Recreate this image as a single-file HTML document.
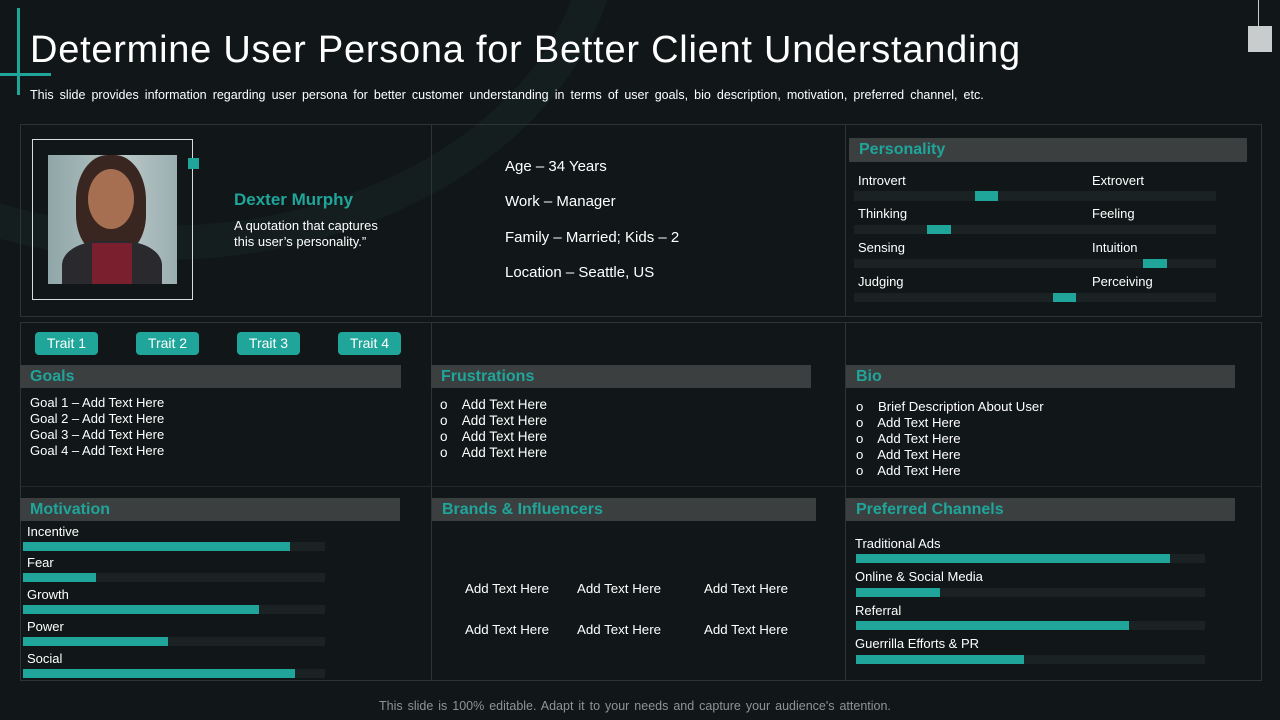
<!DOCTYPE html>
<html><head><meta charset="utf-8"><style>
*{margin:0;padding:0;box-sizing:border-box}
body{width:1280px;height:720px;background:#111718;position:relative;overflow:hidden;font-family:"Liberation Sans",sans-serif;color:#fff}
.a{position:absolute}
.t{font-size:14px;color:#fff;white-space:nowrap}
.hd{position:absolute;background:#3b3f40;color:#1fa59a;font-weight:bold;font-size:16px;padding-left:10px;line-height:23px;height:23px}
.box{position:absolute;border:1px solid #2c3536}
.trk{position:absolute;background:#1b2224;height:9px}
.fill{position:absolute;background:#1fa59a;height:9px}
.btn{position:absolute;background:#1fa59a;border-radius:4px;width:63px;height:23px;font-size:14px;text-align:center;line-height:23px}
.ln{font-size:14px;line-height:16px;white-space:nowrap}
</style></head><body>
<div class="a" style="left:-300px;top:-420px;width:920px;height:680px;border-radius:50%;border:34px solid rgba(30,60,60,0.22)"></div>
<div class="a" style="left:17px;top:8px;width:3px;height:87px;background:#1fa59a"></div>
<div class="a" style="left:0;top:73px;width:51px;height:3px;background:#1fa59a"></div>
<div class="a" style="left:1248px;top:26px;width:24px;height:26px;background:#c8cccc"></div>
<div class="a" style="left:1258px;top:0;width:1px;height:26px;background:#c8cccc"></div>
<div class="a" style="left:30px;top:29px;font-size:38px;color:#fff;letter-spacing:0.75px;white-space:nowrap">Determine User Persona for Better Client Understanding</div>
<div class="a t" style="left:30px;top:88px;font-size:12.5px;word-spacing:2.6px">This slide provides information regarding user persona for better customer understanding in terms of user goals, bio description, motivation, preferred channel, etc.</div>

<div class="box" style="left:20px;top:124px;width:1242px;height:193px"></div>
<div class="a" style="left:431px;top:125px;width:1px;height:191px;background:#2c3536"></div>
<div class="a" style="left:845px;top:125px;width:1px;height:191px;background:#2c3536"></div>
<div class="a" style="left:32px;top:139px;width:161px;height:161px;border:1px solid #d8dcdc"></div>
<div class="a" style="left:48px;top:155px;width:129px;height:129px;background:linear-gradient(90deg,#8fa6a8,#b9c6c6 60%,#9aaeb0);overflow:hidden">
 <div class="a" style="left:28px;top:0;width:70px;height:100px;border-radius:45% 45% 40% 40%;background:#3a2620"></div>
 <div class="a" style="left:40px;top:14px;width:46px;height:60px;border-radius:50%;background:#a66f52"></div>
 <div class="a" style="left:14px;top:86px;width:100px;height:60px;border-radius:40% 40% 0 0;background:#2a2a2e"></div>
 <div class="a" style="left:44px;top:88px;width:40px;height:45px;background:#7a1f2e"></div>
</div>
<div class="a" style="left:188px;top:158px;width:11px;height:11px;background:#1fa59a"></div>
<div class="a" style="left:234px;top:190px;font-size:17px;font-weight:bold;color:#1fa59a">Dexter Murphy</div>
<div class="a ln" style="left:234px;top:218px;font-size:13px">A quotation that captures<br>this user’s personality.”</div>
<div class="a t" style="left:505px;top:158px;font-size:15px">Age – 34 Years</div>
<div class="a t" style="left:505px;top:193px;font-size:15px">Work – Manager</div>
<div class="a t" style="left:505px;top:229px;font-size:15px">Family – Married; Kids – 2</div>
<div class="a t" style="left:505px;top:264px;font-size:15px">Location – Seattle, US</div>

<div class="hd" style="left:849px;top:138px;width:398px;height:24px">Personality</div>
<div class="a t" style="left:858px;top:173px;font-size:13px">Introvert</div><div class="a t" style="left:1092px;top:173px;font-size:13px">Extrovert</div>
<div class="trk" style="left:854px;top:191px;width:362px;height:10px"></div><div class="fill" style="left:975px;top:191px;width:23px;height:10px"></div>
<div class="a t" style="left:858px;top:206px;font-size:13px">Thinking</div><div class="a t" style="left:1092px;top:206px;font-size:13px">Feeling</div>
<div class="trk" style="left:854px;top:225px;width:362px"></div><div class="fill" style="left:927px;top:225px;width:24px"></div>
<div class="a t" style="left:858px;top:240px;font-size:13px">Sensing</div><div class="a t" style="left:1092px;top:240px;font-size:13px">Intuition</div>
<div class="trk" style="left:854px;top:259px;width:362px"></div><div class="fill" style="left:1143px;top:259px;width:24px"></div>
<div class="a t" style="left:858px;top:274px;font-size:13px">Judging</div><div class="a t" style="left:1092px;top:274px;font-size:13px">Perceiving</div>
<div class="trk" style="left:854px;top:293px;width:362px"></div><div class="fill" style="left:1053px;top:293px;width:23px"></div>

<div class="box" style="left:20px;top:322px;width:1242px;height:359px"></div>
<div class="a" style="left:431px;top:323px;width:1px;height:357px;background:#2c3536"></div>
<div class="a" style="left:845px;top:323px;width:1px;height:357px;background:#2c3536"></div>
<div class="a" style="left:21px;top:486px;width:1240px;height:1px;background:#222b2c"></div>
<div class="btn" style="left:35px;top:332px">Trait 1</div>
<div class="btn" style="left:136px;top:332px">Trait 2</div>
<div class="btn" style="left:237px;top:332px">Trait 3</div>
<div class="btn" style="left:338px;top:332px">Trait 4</div>

<div class="hd" style="left:20px;top:365px;width:381px">Goals</div>
<div class="hd" style="left:431px;top:365px;width:380px">Frustrations</div>
<div class="hd" style="left:846px;top:365px;width:389px">Bio</div>
<div class="a ln" style="left:30px;top:395px;font-size:13px">Goal 1 – Add Text Here<br>Goal 2 – Add Text Here<br>Goal 3 – Add Text Here<br>Goal 4 – Add Text Here</div>
<div class="a ln" style="left:440px;top:397px;font-size:13.5px">o&nbsp;&nbsp;&nbsp; Add Text Here<br>o&nbsp;&nbsp;&nbsp; Add Text Here<br>o&nbsp;&nbsp;&nbsp; Add Text Here<br>o&nbsp;&nbsp;&nbsp; Add Text Here</div>
<div class="a ln" style="left:856px;top:399px;font-size:13.2px">o&nbsp;&nbsp;&nbsp; Brief Description About User<br>o&nbsp;&nbsp;&nbsp; Add Text Here<br>o&nbsp;&nbsp;&nbsp; Add Text Here<br>o&nbsp;&nbsp;&nbsp; Add Text Here<br>o&nbsp;&nbsp;&nbsp; Add Text Here</div>

<div class="hd" style="left:20px;top:498px;width:380px">Motivation</div>
<div class="hd" style="left:432px;top:498px;width:384px">Brands &amp; Influencers</div>
<div class="hd" style="left:846px;top:498px;width:389px">Preferred Channels</div>

<div class="a t" style="left:27px;top:524px;font-size:13px">Incentive</div>
<div class="trk" style="left:23px;top:542px;width:302px"></div><div class="fill" style="left:23px;top:542px;width:267px"></div>
<div class="a t" style="left:27px;top:555px;font-size:13px">Fear</div>
<div class="trk" style="left:23px;top:573px;width:302px"></div><div class="fill" style="left:23px;top:573px;width:73px"></div>
<div class="a t" style="left:27px;top:587px;font-size:13px">Growth</div>
<div class="trk" style="left:23px;top:605px;width:302px"></div><div class="fill" style="left:23px;top:605px;width:236px"></div>
<div class="a t" style="left:27px;top:619px;font-size:13px">Power</div>
<div class="trk" style="left:23px;top:637px;width:302px"></div><div class="fill" style="left:23px;top:637px;width:145px"></div>
<div class="a t" style="left:27px;top:651px;font-size:13px">Social</div>
<div class="trk" style="left:23px;top:669px;width:302px"></div><div class="fill" style="left:23px;top:669px;width:272px"></div>

<div class="a t" style="left:465px;top:581px;font-size:13.3px">Add Text Here</div>
<div class="a t" style="left:577px;top:581px;font-size:13.3px">Add Text Here</div>
<div class="a t" style="left:704px;top:581px;font-size:13.3px">Add Text Here</div>
<div class="a t" style="left:465px;top:622px;font-size:13.3px">Add Text Here</div>
<div class="a t" style="left:577px;top:622px;font-size:13.3px">Add Text Here</div>
<div class="a t" style="left:704px;top:622px;font-size:13.3px">Add Text Here</div>

<div class="a t" style="left:855px;top:536px;font-size:13px">Traditional Ads</div>
<div class="trk" style="left:856px;top:554px;width:349px"></div><div class="fill" style="left:856px;top:554px;width:314px"></div>
<div class="a t" style="left:855px;top:569px;font-size:13px">Online &amp; Social Media</div>
<div class="trk" style="left:856px;top:588px;width:349px"></div><div class="fill" style="left:856px;top:588px;width:84px"></div>
<div class="a t" style="left:855px;top:603px;font-size:13px">Referral</div>
<div class="trk" style="left:856px;top:621px;width:349px"></div><div class="fill" style="left:856px;top:621px;width:273px"></div>
<div class="a t" style="left:855px;top:636px;font-size:13px">Guerrilla Efforts &amp; PR</div>
<div class="trk" style="left:856px;top:655px;width:349px"></div><div class="fill" style="left:856px;top:655px;width:168px"></div>

<div class="a t" style="left:379px;top:699px;font-size:12.5px;color:#8c9494;word-spacing:1.5px">This slide is 100% editable. Adapt it to your needs and capture your audience's attention.</div>
</body></html>
